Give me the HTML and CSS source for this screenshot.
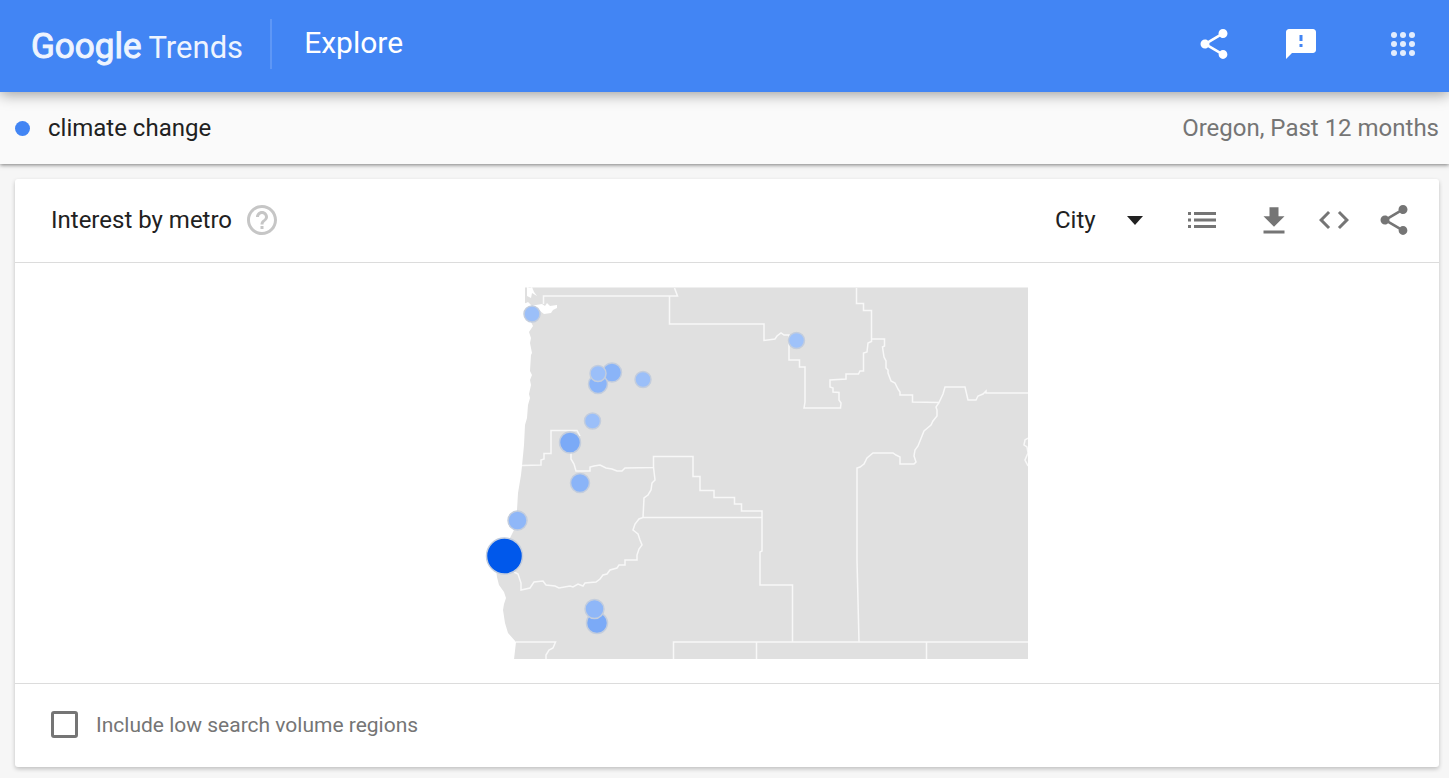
FILE: index.html
```html
<!DOCTYPE html>
<html lang="en">
<head>
    <meta charset="UTF-8">
    <meta name="viewport" content="width=device-width, initial-scale=1.0">
    <title>climate change - Explore - Google Trends</title>
    <link rel="stylesheet" href="styles.css">
</head>
<body>
    <header class="topbar">
        <a class="logo" href="#"><span class="logo-google">Google</span><span class="logo-trends">Trends</span></a>
        <h1 class="page-name">Explore</h1>
        <div class="topbar-actions">
            <button type="button" class="icon-button" aria-label="Share">
                <svg class="icon" viewBox="0 0 24 24"><path d="M18 16.08c-.76 0-1.44.3-1.96.77L8.91 12.7c.05-.23.09-.46.09-.7s-.04-.47-.09-.7l7.05-4.11c.54.5 1.25.81 2.04.81 1.66 0 3-1.34 3-3s-1.34-3-3-3-3 1.34-3 3c0 .24.04.47.09.7L8.04 9.81C7.5 9.31 6.79 9 6 9c-1.66 0-3 1.34-3 3s1.34 3 3 3c.79 0 1.5-.31 2.04-.81l7.12 4.16c-.05.21-.08.43-.08.65 0 1.61 1.31 2.92 2.92 2.92s2.92-1.31 2.92-2.92-1.31-2.92-2.92-2.92z"/></svg>
            </button>
            <button type="button" class="icon-button" aria-label="Send feedback">
                <svg class="icon" viewBox="0 0 24 24"><path d="M20 2H4c-1.1 0-1.99.9-1.99 2L2 22l4-4h14c1.1 0 2-.9 2-2V4c0-1.1-.9-2-2-2zm-7 12h-2v-2h2v2zm0-4h-2V6h2v4z"/></svg>
            </button>
            <button type="button" class="icon-button apps-button" aria-label="Google apps">
                <svg class="icon" viewBox="0 0 24 24"><circle cx="6" cy="6" r="2"/><circle cx="12" cy="6" r="2"/><circle cx="18" cy="6" r="2"/><circle cx="6" cy="12" r="2"/><circle cx="12" cy="12" r="2"/><circle cx="18" cy="12" r="2"/><circle cx="6" cy="18" r="2"/><circle cx="12" cy="18" r="2"/><circle cx="18" cy="18" r="2"/></svg>
            </button>
        </div>
    </header>

    <div class="querybar">
        <span class="term-dot"></span>
        <span class="term">climate change</span>
        <span class="scope">Oregon, Past 12 months</span>
    </div>

    <main class="content">
        <section class="card">
            <div class="card-header">
                <h2 class="card-title">Interest by metro</h2>
                <button type="button" class="icon-button help-button" aria-label="Help">
                    <svg class="icon" viewBox="0 0 24 24"><path d="M11 18h2v-2h-2v2zm1-16C6.48 2 2 6.48 2 12s4.48 10 10 10 10-4.48 10-10S17.52 2 12 2zm0 18c-4.41 0-8-3.59-8-8s3.59-8 8-8 8 3.59 8 8-3.59 8-8 8zm0-14c-2.21 0-4 1.79-4 4h2c0-1.1.9-2 2-2s2 .9 2 2c0 2-3 1.75-3 5h2c0-2.25 3-2.5 3-5 0-2.21-1.79-4-4-4z"/></svg>
                </button>
                <div class="card-actions">
                    <div class="resolution">
                        <select class="resolution-select" aria-label="Resolution">
                            <option>City</option>
                            <option>Metro</option>
                        </select>
                        <svg class="resolution-arrow" viewBox="0 0 16 9"><path d="M0 0h16L8 9z"/></svg>
                    </div>
                    <button type="button" class="icon-button list-button" aria-label="Show as list">
                        <svg class="icon" viewBox="0 0 36 36"><path d="M4 10h3v3H4zM4 16.5h3v3H4zM4 23h3v3H4zM10 10h22v3H10zM10 16.5h22v3H10zM10 23h22v3H10z"/></svg>
                    </button>
                    <button type="button" class="icon-button" aria-label="Download CSV">
                        <svg class="icon" viewBox="0 0 24 24"><path d="M19 9.5h-4v-6H9v6H5l7 7zM5 19v2h14v-2z"/></svg>
                    </button>
                    <button type="button" class="icon-button" aria-label="Embed">
                        <svg class="icon" viewBox="0 0 24 24"><path d="M9.4 16.6L4.8 12l4.6-4.6L8 6l-6 6 6 6 1.4-1.4zm5.2 0l4.6-4.6-4.6-4.6L16 6l6 6-6 6-1.4-1.4z"/></svg>
                    </button>
                    <button type="button" class="icon-button" aria-label="Share chart">
                        <svg class="icon" viewBox="0 0 24 24"><path d="M18 16.08c-.76 0-1.44.3-1.96.77L8.91 12.7c.05-.23.09-.46.09-.7s-.04-.47-.09-.7l7.05-4.11c.54.5 1.25.81 2.04.81 1.66 0 3-1.34 3-3s-1.34-3-3-3-3 1.34-3 3c0 .24.04.47.09.7L8.04 9.81C7.5 9.31 6.79 9 6 9c-1.66 0-3 1.34-3 3s1.34 3 3 3c.79 0 1.5-.31 2.04-.81l7.12 4.16c-.05.21-.08.43-.08.65 0 1.61 1.31 2.92 2.92 2.92s2.92-1.31 2.92-2.92-1.31-2.92-2.92-2.92z"/></svg>
                    </button>
                </div>
            </div>

            <div class="map-area">
                <svg class="map" viewBox="426 287 602 372" role="img" aria-label="Map of Oregon cities">
                    <!-- land -->
                    <path class="land" d="M525 287.5H1028V659.5H514L516 642L508 633L505 623L503 610L504 604L506 598L504 592L499 585L497 577L496 570L500 562L505 550L510 538L514 530L517 510L518 493L521 475L522 466L524 445L525 425L527 418L528 405L530 398L529 394L531 385L530 380L532 375L530 371L531 355L532 353L530 343L531 338L529 332L533 326L531 322L529 305L525 303Z"/>
                    <!-- water -->
                    <path class="water" d="M527 287L530 288L532 287L534 292L537 296L532 293L531 298L527 296ZM524 304L528 302L532 306L536 305L542 304L545 306L547 303L550 306L557 305V308L553 310L551 313L544 314L540 311L535 309L526 312Z"/>
                    <!-- metro borders -->
                    <g class="borders">
                        <path d="M543.5 304V296H677.5L674.5 288M669.5 296V324H764V340.5L775 339L777 336L781 333L784 335H789V360H799.5V367H805V402L804 408H840.5L841 403L839 400V392.5L833 392V388L830 387V380L846 379V374H858.5L860 371H863.5V353L867 352L868 343L871.5 341.5V310.5H863.5V303.5H856.5V288"/>
                        <path d="M871.5 339H884.5V346L882.5 347L884 357L886 361V368L888 370V373L891 381L895 383L898 389L900 392V395H912.5V402L939 402.5L943 394L945 387H965L968 400H976L978 396L983 394L986 391V393H1028"/>
                        <path d="M939 402.5L936 407L937 410V416L933 421L931 425L924 431L918 446L915 450L914 456L916 462L914 464H900V457L896 455L893 453H873L867 458L864 464L860 467L857 468V560L859 642"/>
                        <path d="M522 465.5L541 465V460L544 459V453.5H551V430.5H577L580 436M571 452V459L574 464L576 471H590V467L594 466L600 465L606 468L612 469L617 471H622L625 468L653.5 467.5V456.5H693V476.5H700V490.5H714V497.5H734.5V504H741.5V511H762V551L760 552V585H792.5V642"/>
                        <path d="M653.5 467.5L655 480L652 483L651 490L648 495L644 498L643 517.5L639 519L635 524L633 530L638 534L640 540L642 545L639 549L637 555V560H625V565H619L617 568L610 570L607 574L603 575L600 579L596 582L585 583L583 586L578 584L573 587L570 586L559 588L555 586L546 585L543 581L534 582L530 588L521 590V583L518 574L514 572M643 517.5H762"/>
                        <path d="M516 642H555.5L553 648L549 650L546 655V660M673.5 660V642H1028M756.5 642V660M926.5 642V660"/>
                        <path d="M1028 438L1025 440L1024 445L1027 447L1028 453L1025 460L1028 466"/>
                    </g>
                    <!-- cities -->
                    <g class="cities">
                        <circle cx="504.5" cy="556" r="18" fill="#0058eb"/>
                        <circle cx="570" cy="442.5" r="10.5" fill="#7baaf7"/>
                        <circle cx="597" cy="623" r="10.5" fill="#7baaf7"/>
                        <circle cx="612" cy="372.5" r="9.5" fill="#8ab4f8"/>
                        <circle cx="598" cy="384" r="9.5" fill="#8ab4f8"/>
                        <circle cx="580" cy="483" r="9.5" fill="#8ab4f8"/>
                        <circle cx="517.5" cy="520.5" r="9.5" fill="#8fb7f8"/>
                        <circle cx="594.5" cy="609" r="9.5" fill="#8fb7f8"/>
                        <circle cx="598" cy="373.5" r="8" fill="#9bbff9"/>
                        <circle cx="643" cy="379.5" r="8" fill="#9bbff9"/>
                        <circle cx="592.5" cy="421" r="8" fill="#9bbff9"/>
                        <circle cx="532" cy="314" r="8" fill="#9bbff9"/>
                        <circle cx="796.5" cy="340.5" r="8" fill="#9fc2fa"/>
                    </g>
                </svg>
            </div>

            <div class="card-footer">
                <input type="checkbox" class="checkbox" id="lowVolume">
                <label class="checkbox-label" for="lowVolume">Include low search volume regions</label>
            </div>
        </section>
    </main>
</body>
</html>
```

FILE: styles.css
```css
* {
    box-sizing: border-box;
}

body {
    margin: 0;
    font-family: Roboto, Arial, sans-serif;
    font-size: 24px;
    color: #212121;
    background-color: #f6f6f6;
}

h1,
h2 {
    margin: 0;
    font-weight: 400;
}

/* top bar */
.topbar {
    position: relative;
    display: flex;
    align-items: center;
    height: 92px;
    padding: 0 28px 4px 31px;
    color: #fff;
    background-color: #4285f4;
    box-shadow: 0 2px 14px rgba(0, 0, 0, 0.4);
    z-index: 2;
}

.logo {
    display: flex;
    align-items: baseline;
    gap: 7px;
    height: 50px;
    padding-right: 27px;
    border-right: 2px solid #5e97f6;
    line-height: 56px;
    color: #eef4fe;
    text-decoration: none;
}

.logo-google {
    font-size: 35px;
    -webkit-text-stroke: 1px #eef4fe;
}

.logo-trends {
    font-size: 31px;
}

.page-name {
    padding-bottom: 2px;
    margin-left: 32px;
    font-size: 30px;
    line-height: 46px;
}

.topbar-actions {
    display: flex;
    gap: 51px;
    margin-left: auto;
}

.apps-button {
    margin-left: 15px;
    opacity: 0.85;
}

.icon-button {
    display: block;
    padding: 0;
    border: none;
    background: none;
    color: inherit;
    cursor: pointer;
}

.icon {
    display: block;
    width: 36px;
    height: 36px;
    fill: currentColor;
}

/* search term bar */
.querybar {
    position: relative;
    display: flex;
    align-items: center;
    height: 72px;
    padding: 0 10px 0 15px;
    background-color: #fafafa;
    box-shadow: 0 1px 4px rgba(0, 0, 0, 0.5);
    z-index: 1;
}

.term-dot {
    width: 15px;
    height: 15px;
    margin-right: 18px;
    border-radius: 50%;
    background-color: #4285f4;
}

.scope {
    margin-left: auto;
    color: #757575;
}

/* card */
.content {
    padding: 15px 10px 11px 15px;
}

.card {
    border-radius: 3px;
    background-color: #fff;
    box-shadow: 0 2px 4px rgba(0, 0, 0, 0.22);
}

.card-header {
    display: flex;
    align-items: center;
    height: 84px;
    padding: 0 27px 2px 36px;
    border-bottom: 1px solid #dcdcdc;
}

.card-title {
    font-size: 24px;
}

.help-button {
    margin-left: 12px;
    color: #c6c6c6;
}

.card-actions {
    display: flex;
    align-items: center;
    gap: 24px;
    margin-left: auto;
    color: #757575;
}

.list-button {
    margin: 0 12px;
}

.resolution {
    position: relative;
}

.resolution-select {
    display: block;
    width: 93px;
    padding: 0;
    border: none;
    background: none;
    font: inherit;
    color: #212121;
    appearance: none;
}

.resolution-arrow {
    position: absolute;
    top: 10px;
    right: 5px;
    width: 16px;
    height: 9px;
    fill: #212121;
    pointer-events: none;
}

.map-area {
    padding: 24px 0;
}

.map {
    display: block;
    width: 100%;
    max-width: 602px;
    margin: 0 auto;
}

.land {
    fill: #e0e0e0;
}

.water {
    fill: #fff;
}

.borders {
    fill: none;
    stroke: #f8f8f8;
    stroke-width: 1.5;
}

.cities {
    stroke: #c3cddd;
    stroke-width: 1.5;
}

.card-footer {
    display: flex;
    align-items: center;
    height: 84px;
    padding: 0 36px 2px;
    border-top: 1px solid #dcdcdc;
}

.checkbox {
    width: 27px;
    height: 27px;
    margin: 0 18px 0 0;
    border: 3px solid #757575;
    border-radius: 3px;
    background-color: #fff;
    appearance: none;
}

.checkbox:checked {
    background-color: #4285f4;
}

.checkbox-label {
    font-size: 21px;
    color: #757575;
}
```
